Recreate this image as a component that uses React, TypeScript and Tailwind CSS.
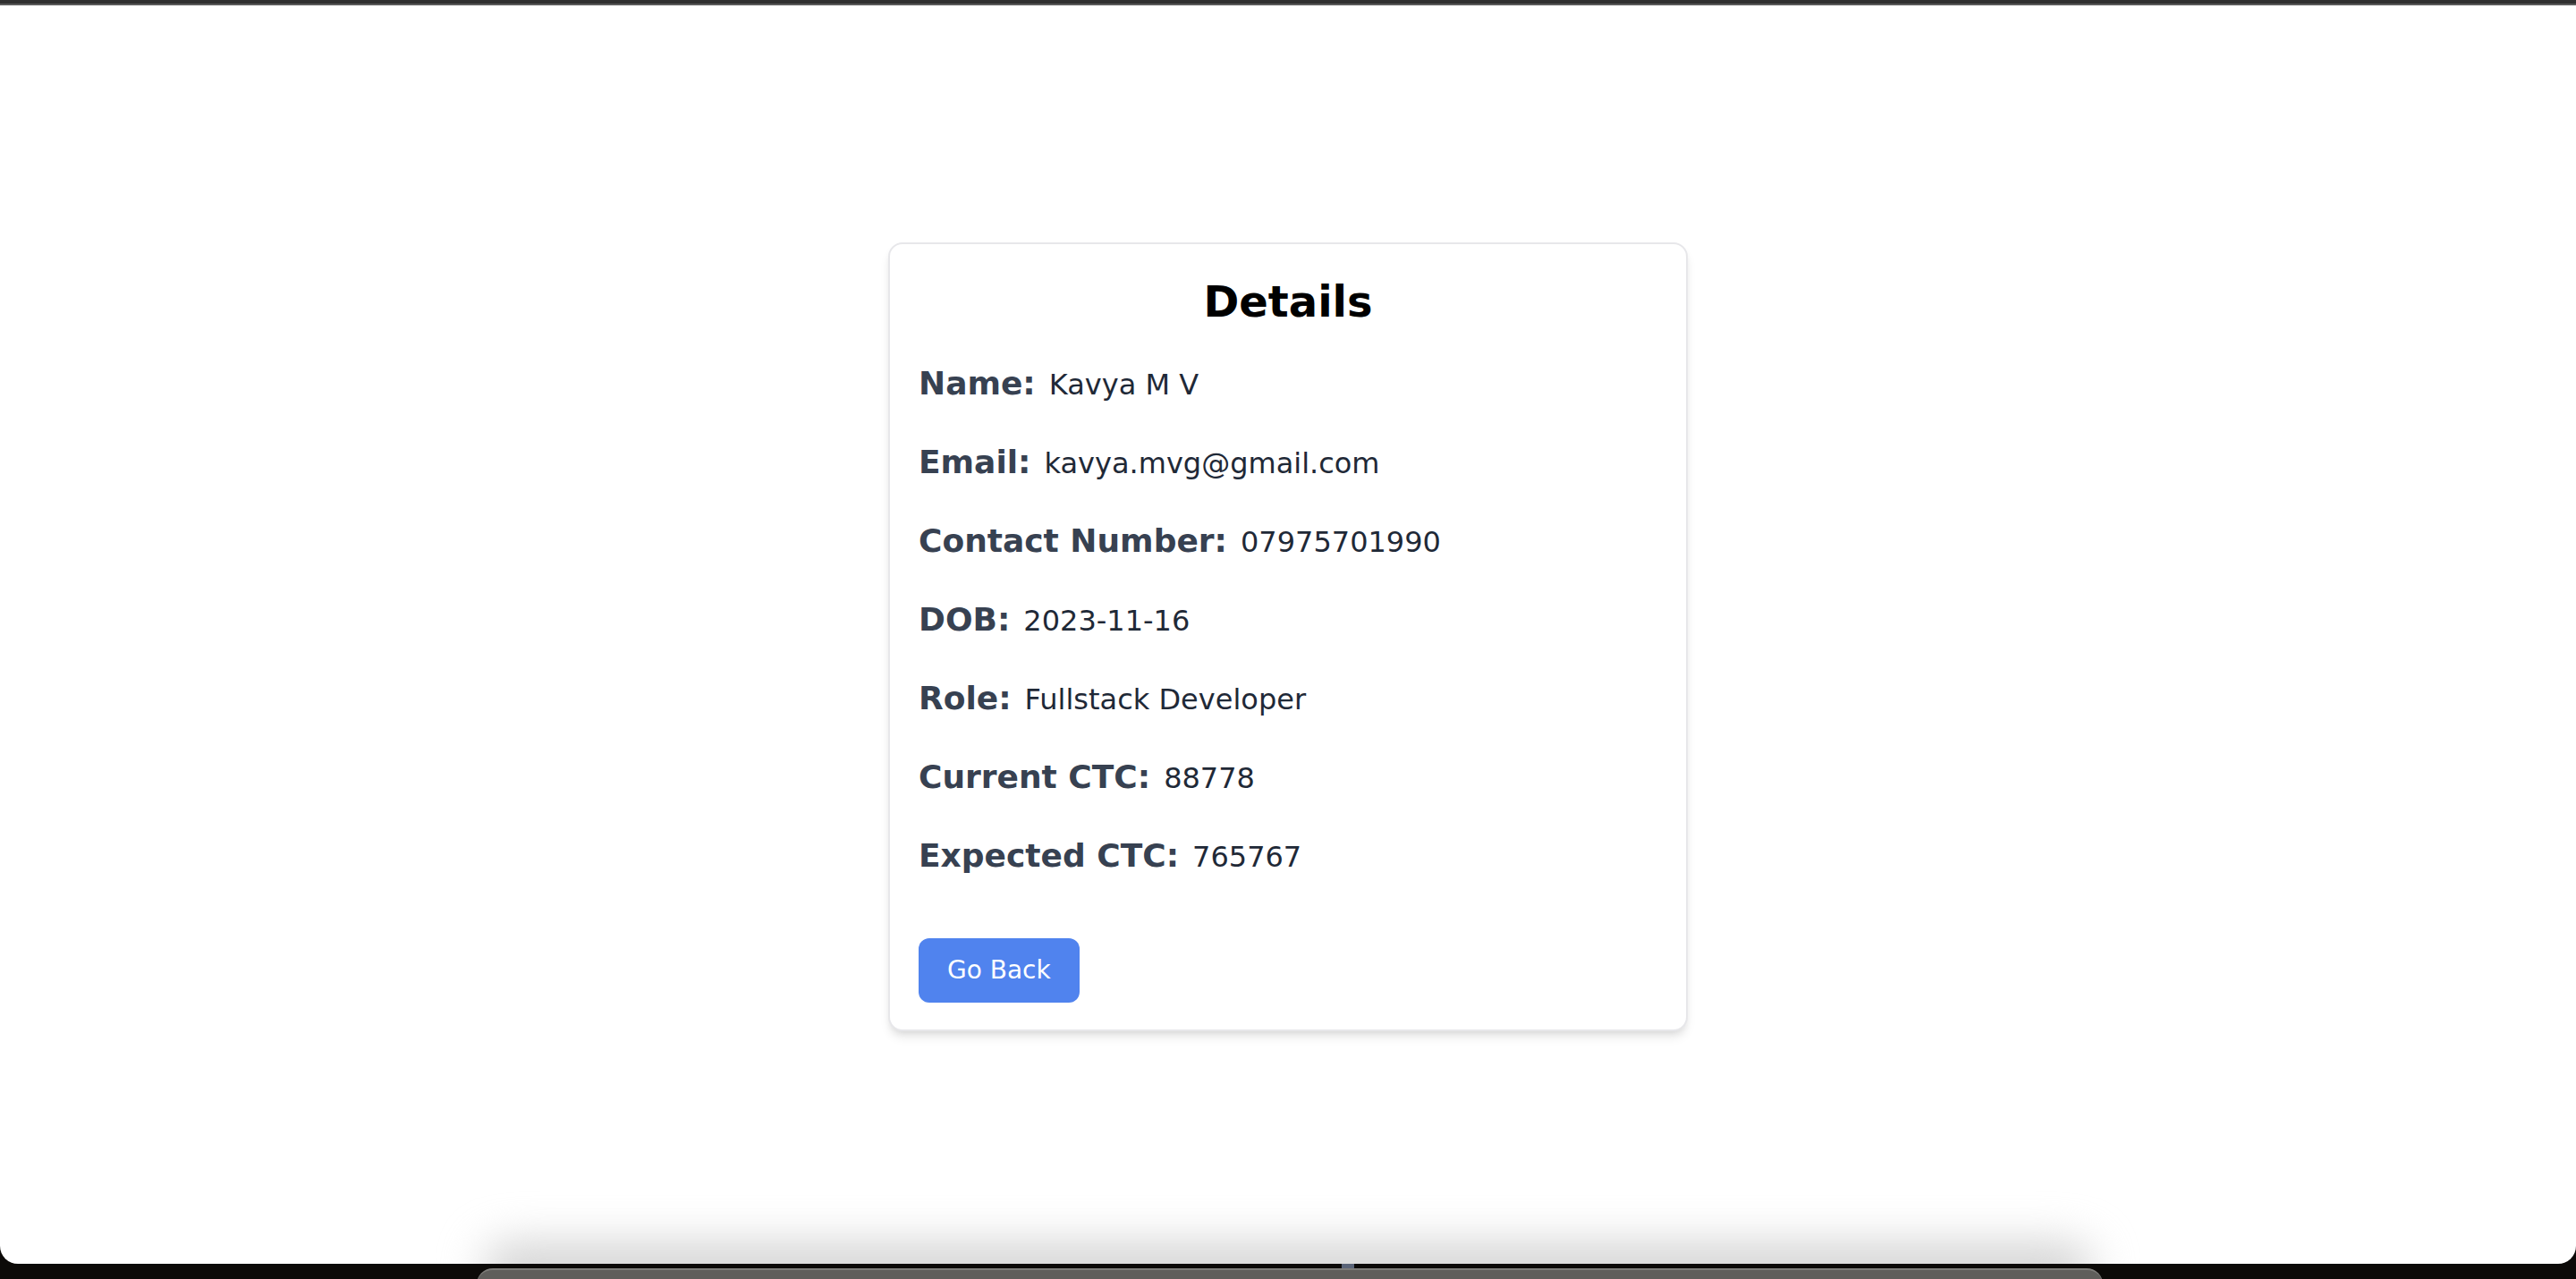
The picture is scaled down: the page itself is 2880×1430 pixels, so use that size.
import React from "react";

const rows: [string, string][] = [
  ["Name:", "Kavya M V"],
  ["Email:", "kavya.mvg@gmail.com"],
  ["Contact Number:", "07975701990"],
  ["DOB:", "2023-11-16"],
  ["Role:", "Fullstack Developer"],
  ["Current CTC:", "88778"],
  ["Expected CTC:", "765767"],
];

export default function App() {
  return (
    <div
      className="relative flex h-[1430px] w-full flex-col overflow-hidden bg-[#0c0a08]"
      style={{ fontFamily: '"DejaVu Sans", Verdana, sans-serif' }}
    >
      <div className="h-[4px] w-full bg-[#303030]" />
      <div className="h-[2px] w-full bg-[#5a5a5a]" />
      <div className="relative flex h-[1407px] w-full items-center justify-center overflow-hidden rounded-b-[20px] bg-white">
        <div className="pointer-events-none absolute bottom-[-36px] left-[540px] h-[60px] w-[1800px] rounded-full bg-[#d4d4d4] blur-[24px]" />
        <div className="relative mt-[4px] flex w-[894px] flex-col rounded-[16px] border-2 border-[#e7e7ea] bg-white px-[32px] pb-[30px] pt-[32px] shadow-[0_8px_12px_-2px_rgba(0,0,0,0.1),0_4px_8px_-4px_rgba(0,0,0,0.1)]">
          <h2 className="mb-[32px] text-center text-[48px] font-bold leading-[64px] text-black">
            Details
          </h2>
          {rows.map(([label, value]) => (
            <p key={label} className="mb-[31px] flex items-baseline leading-[56px]">
              <span className="mr-[15px] text-[36px] font-bold text-[#374151]">{label}</span>
              <span className="text-[32px] text-[#1f2937]">{value}</span>
            </p>
          ))}
          <div className="mt-[32px]">
            <button className="rounded-[12px] bg-[#5083ee] px-[32px] py-[16px] text-[28px] leading-[40px] text-white">
              Go Back
            </button>
          </div>
        </div>
      </div>
      <div className="relative flex-1">
        <div className="absolute left-[1500px] top-0 h-[8px] w-[14px] bg-[#5a6478]" />
        <div className="absolute left-[533px] top-[5px] h-[40px] w-[1818px] rounded-t-[18px] border-t-2 border-[#7d7c79] bg-[#5f5e5b]" />
      </div>
    </div>
  );
}
